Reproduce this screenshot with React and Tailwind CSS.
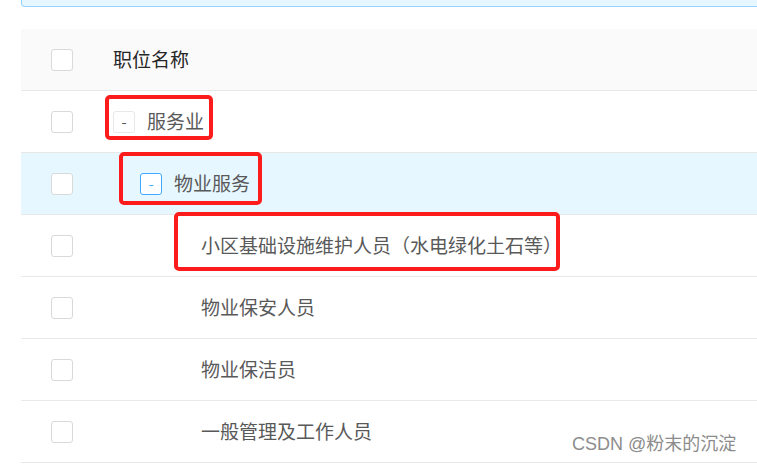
import React from "react";

const rows = [
  { name: "服务业", level: 0, expand: true },
  { name: "物业服务", level: 1, expand: true, active: true },
  { name: "小区基础设施维护人员（水电绿化土石等）", level: 2 },
  { name: "物业保安人员", level: 2 },
  { name: "物业保洁员", level: 2 },
  { name: "一般管理及工作人员", level: 2 },
];

const indents = { 0: "pl-0", 1: "pl-[27px]", 2: "pl-[54px]" };

function Checkbox() {
  return <span className="block w-[22px] h-[22px] rounded-[3px] border border-[#d9d9d9] bg-white" />;
}

function ExpandIcon({ active }) {
  return (
    <span
      className={
        "mr-[12px] flex w-[22px] h-[22px] items-center justify-center rounded-[3px] border bg-white text-[15px] leading-none " +
        (active ? "border-[#40a9ff] text-[#40a9ff]" : "border-[#e8e8e8] text-[#595959]")
      }
    >
      -
    </span>
  );
}

export default function App() {
  return (
    <div
      className="relative w-[757px] h-[465px] overflow-hidden bg-white"
      style={{ fontFamily: '"Noto Sans CJK SC", "Noto Sans", sans-serif' }}
    >
      {/* alert bar peeking from above */}
      <div className="ml-[21px] h-[7px] rounded-bl-[4px] border-b border-l border-[#91d5ff] bg-[#e6f7ff]" />

      {/* table */}
      <div className="ml-[21px] mt-[22px]">
        <div className="flex h-[62px] items-center border-b border-[#e8e8e8] bg-[#fafafa]">
          <div className="w-[92px] pl-[30px]">
            <Checkbox />
          </div>
          <span className="text-[19px] text-[#262626]">职位名称</span>
        </div>

        {rows.map((r) => (
          <div
            key={r.name}
            className={
              "flex h-[62px] items-center border-b border-[#e8e8e8] " + (r.active ? "bg-[#e6f7ff]" : "bg-white")
            }
          >
            <div className="w-[92px] pl-[30px]">
              <Checkbox />
            </div>
            <div className={"flex items-center " + indents[r.level]}>
              {r.expand ? <ExpandIcon active={r.active} /> : <span className="mr-[12px] w-[22px]" />}
              <span className="text-[19px] text-[#595959]">{r.name}</span>
            </div>
          </div>
        ))}
      </div>

      {/* red annotation boxes */}
      <div className="absolute left-[105px] top-[95px] w-[108px] h-[45px] rounded-[5px] border-4 border-[#fc1c1c]" />
      <div className="absolute left-[119px] top-[152px] w-[143px] h-[53px] rounded-[5px] border-4 border-[#fc1c1c]" />
      <div className="absolute left-[174px] top-[212px] w-[386px] h-[59px] rounded-[5px] border-4 border-[#fc1c1c]" />

      {/* watermark */}
      <div
        className="absolute left-[572px] top-[431px] text-[18px] text-[#8c8c8c]"
        style={{ fontFamily: '"Liberation Sans", "Noto Sans CJK SC", sans-serif', textShadow: "1px 1px 1px #fff" }}
      >
        CSDN @粉末的沉淀
      </div>
    </div>
  );
}
